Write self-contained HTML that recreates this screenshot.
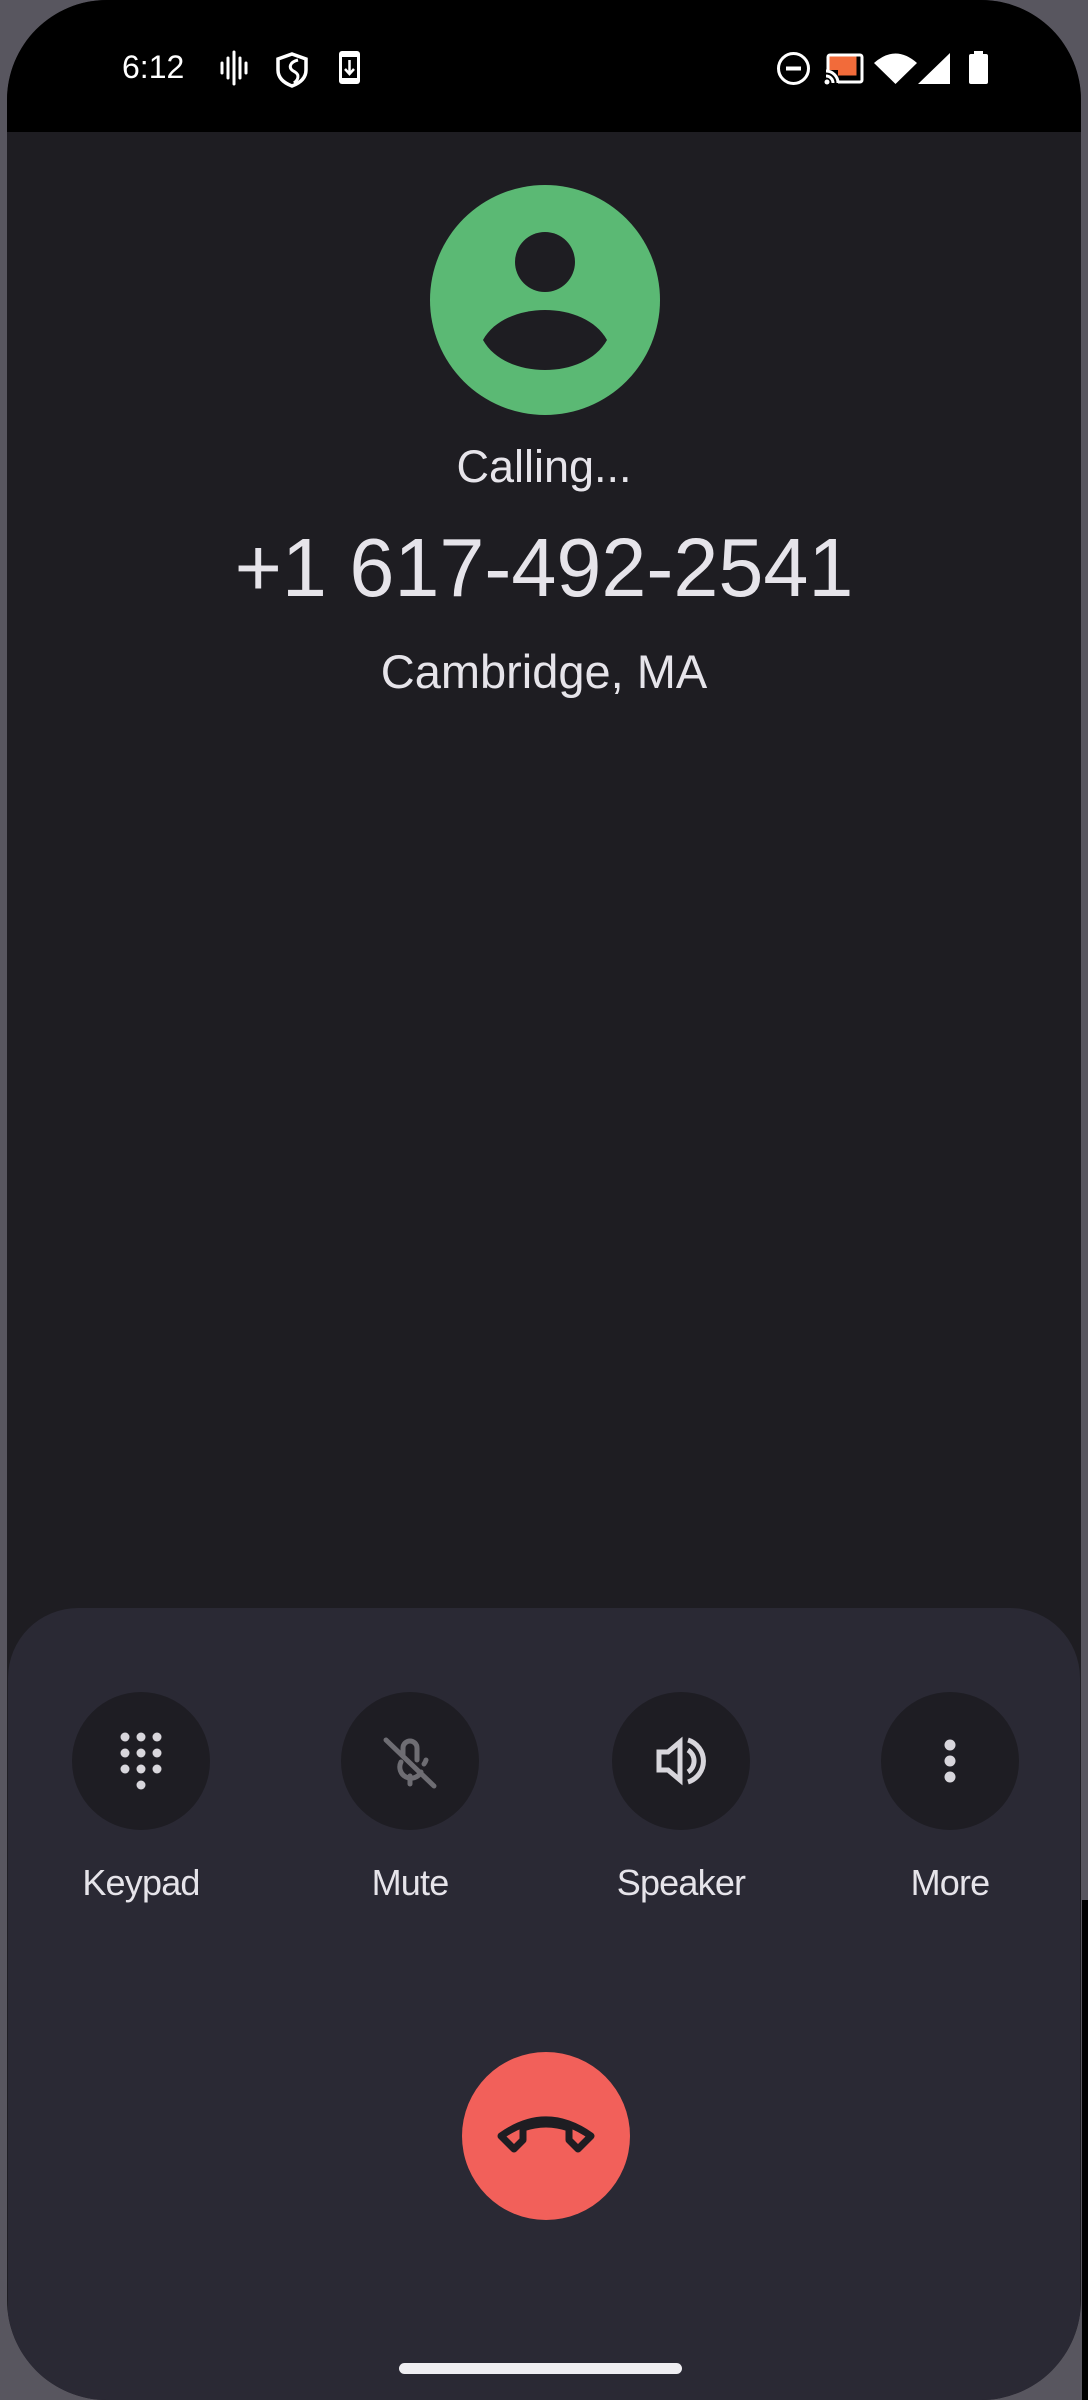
<!DOCTYPE html>
<html><head><meta charset="utf-8"><style>
html,body{margin:0;padding:0;width:1088px;height:2400px;overflow:hidden;background:#58565f;}
#screen{position:absolute;left:7px;top:0;width:1074px;height:2400px;background:#1e1d22;border-radius:100px;overflow:hidden;}
#rstrip{position:absolute;right:0;top:1900px;width:6px;height:500px;background:#000;}
#status{position:absolute;left:0;top:0;width:1074px;height:132px;background:#000;}
.t{position:absolute;left:0;width:1088px;text-align:center;font-family:"Liberation Sans",sans-serif;color:#e6e4ea;white-space:nowrap;}
#panel{position:absolute;left:1px;top:1608px;width:1072px;height:900px;background:#2a2934;border-radius:70px;}
.btn{position:absolute;width:138px;height:138px;border-radius:50%;background:#1e1d23;top:1692px;}
.lbl{position:absolute;top:1862px;width:240px;text-align:center;font-family:"Liberation Sans",sans-serif;font-size:36px;color:#e6e4ea;letter-spacing:-0.8px;}
svg{position:absolute;left:0;top:0;}
</style></head><body>
<div id="rstrip"></div>
<div id="screen"><div id="status"></div><div id="panel"></div></div>

<div class="btn" style="left:72px"></div>
<div class="btn" style="left:341px"></div>
<div class="btn" style="left:612px"></div>
<div class="btn" style="left:881px"></div>

<svg width="1088" height="2400">
  <text x="122" y="78" font-family="Liberation Sans, sans-serif" font-size="32" fill="#fff">6:12</text>
  <g stroke="#fff" stroke-width="3" stroke-linecap="round">
    <line x1="222" y1="63" x2="222" y2="73"/><line x1="228" y1="58" x2="228" y2="78"/>
    <line x1="234" y1="52" x2="234" y2="84"/><line x1="240" y1="58" x2="240" y2="78"/>
    <line x1="246" y1="63" x2="246" y2="73"/>
  </g>
  <path d="M292 54 L306 59 V70 C306 78 300 83 292 86 C284 83 278 78 278 70 V59 Z" fill="none" stroke="#fff" stroke-width="3.5"/>
  <path d="M298 60 C290 62 287 68 295 72 C300 75 298 80 294 83" fill="none" stroke="#fff" stroke-width="3"/>
  <rect x="339" y="51" width="21" height="33" rx="3" fill="#fff"/>
  <rect x="342" y="57" width="15" height="21" fill="#000"/>
  <path d="M349.5 60 V73 M345 69 L349.5 74 L354 69" stroke="#fff" stroke-width="2.5" fill="none"/>
  <circle cx="793.5" cy="68.5" r="15" fill="none" stroke="#fff" stroke-width="3"/>
  <rect x="786" y="66.5" width="15" height="4" fill="#fff"/>
  <rect x="828" y="55" width="34" height="27" rx="2" fill="none" stroke="#fff" stroke-width="3"/>
  <rect x="829.5" y="56.5" width="27" height="19" fill="#f26b3a"/>
  <rect x="824" y="70" width="14" height="16" fill="#000"/>
  <path d="M826 71 A12 12 0 0 1 838 83 M826 76 A7 7 0 0 1 833 83" fill="none" stroke="#fff" stroke-width="3"/>
  <circle cx="827" cy="82" r="2.5" fill="#fff"/>
  <path d="M874 63 Q895.5 44 917 63 L895.5 84 Z" fill="#fff"/>
  <path d="M950 53 V84 H918 Z" fill="#fff"/>
  <rect x="974" y="51" width="9" height="4" fill="#fff"/>
  <rect x="969" y="54" width="19" height="30" rx="2" fill="#fff"/>

  <circle cx="545" cy="300" r="115" fill="#5bb974"/>
  <circle cx="545" cy="262" r="30" fill="#1e1d22"/>
  <path d="M483 340 C505 300 585 300 607 340 C585 380 505 380 483 340 Z" fill="#1e1d22"/>

  <g fill="#d8d6dc">
    <circle cx="125" cy="1737" r="4.5"/><circle cx="141" cy="1737" r="4.5"/><circle cx="157" cy="1737" r="4.5"/>
    <circle cx="125" cy="1753" r="4.5"/><circle cx="141" cy="1753" r="4.5"/><circle cx="157" cy="1753" r="4.5"/>
    <circle cx="125" cy="1769" r="4.5"/><circle cx="141" cy="1769" r="4.5"/><circle cx="157" cy="1769" r="4.5"/>
    <circle cx="141" cy="1785" r="4.5"/>
  </g>
  <g stroke="#6e6d73" stroke-width="5" fill="none" stroke-linecap="round">
    <path d="M403 1755 V1748 A7 7 0 0 1 417 1748 V1760"/>
    <path d="M401 1762 A11 11 0 0 0 421 1772 M426 1760 A11 11 0 0 1 424 1764"/>
    <line x1="410" y1="1776" x2="410" y2="1784"/>
    <line x1="386" y1="1740" x2="434" y2="1786"/>
  </g>
  <path d="M659 1752 H668 L680 1742 V1780 L668 1770 H659 Z" fill="none" stroke="#d8d6dc" stroke-width="5"/>
  <path d="M688 1750 A13 13 0 0 1 688 1772" fill="none" stroke="#d8d6dc" stroke-width="5"/>
  <path d="M688 1740 A22 22 0 0 1 688 1782" fill="none" stroke="#d8d6dc" stroke-width="5"/>
  <g fill="#d8d6dc"><circle cx="950" cy="1745" r="5.5"/><circle cx="950" cy="1761" r="5.5"/><circle cx="950" cy="1777" r="5.5"/></g>

  <circle cx="546" cy="2136" r="84" fill="#f2605a"/>
  <path d="M501 2136 Q546 2104 591 2136 L578 2149 L569 2140 V2128 Q546 2120 523 2128 V2140 L514 2149 Z" fill="none" stroke="#1e1d22" stroke-width="7" stroke-linejoin="round"/>

  <rect x="399" y="2363" width="283" height="11" rx="5.5" fill="#efeef2"/>
</svg>

<div class="t" style="top:441px;font-size:45px;">Calling...</div>
<div class="t" style="top:520px;font-size:83px;transform:scaleX(0.975);">+1 617-492-2541</div>
<div class="t" style="top:644px;font-size:47px;">Cambridge, MA</div>

<div class="lbl" style="left:21px">Keypad</div>
<div class="lbl" style="left:290px">Mute</div>
<div class="lbl" style="left:561px">Speaker</div>
<div class="lbl" style="left:830px">More</div>
</body></html>
